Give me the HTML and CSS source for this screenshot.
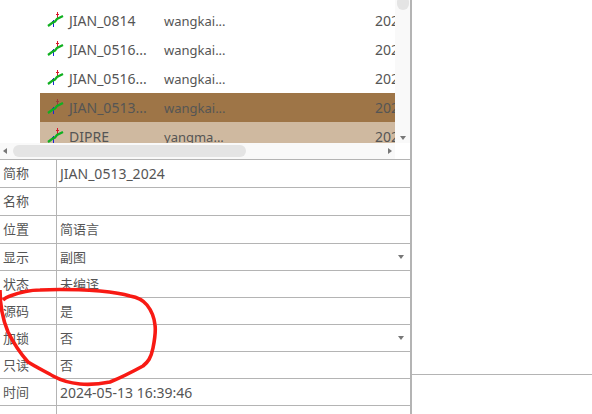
FILE: index.html
```html
<!DOCTYPE html>
<html lang="en">
<head>
    <meta charset="UTF-8">
    <meta name="viewport" content="width=device-width, initial-scale=1.0">
    <title>指标属性</title>
    <link rel="stylesheet" href="styles.css">
</head>
<body>
    <div class="page">
        <div class="left-panel">
            <!-- 指标列表 -->
            <div class="list-box">
                <div class="list-main">
                    <div class="list-rows">
                        <div class="list-row">
                            <svg class="row-icon" viewBox="0 0 18 17"><path class="ic-red" d="M10.5 0 V6 M9 2.5 H12"/><path class="ic-blue" d="M6.5 8 V15 M5 9.5 H8"/><path class="ic-green" d="M1 14 L5 11 L8 9.5 L10 7 L16 4"/></svg>
                            <span class="col-name">JIAN_0814</span><span class="col-user">wangkai...</span><span class="col-date">2024</span>
                        </div>
                        <div class="list-row">
                            <svg class="row-icon" viewBox="0 0 18 17"><path class="ic-red" d="M10.5 0 V6 M9 2.5 H12"/><path class="ic-blue" d="M6.5 8 V15 M5 9.5 H8"/><path class="ic-green" d="M1 14 L5 11 L8 9.5 L10 7 L16 4"/></svg>
                            <span class="col-name">JIAN_0516...</span><span class="col-user">wangkai...</span><span class="col-date">2024</span>
                        </div>
                        <div class="list-row">
                            <svg class="row-icon" viewBox="0 0 18 17"><path class="ic-red" d="M10.5 0 V6 M9 2.5 H12"/><path class="ic-blue" d="M6.5 8 V15 M5 9.5 H8"/><path class="ic-green" d="M1 14 L5 11 L8 9.5 L10 7 L16 4"/></svg>
                            <span class="col-name">JIAN_0516...</span><span class="col-user">wangkai...</span><span class="col-date">2024</span>
                        </div>
                        <div class="list-row selected">
                            <svg class="row-icon" viewBox="0 0 18 17"><path class="ic-red dim" d="M10.5 0 V6 M9 2.5 H12"/><path class="ic-blue" d="M6.5 8 V15 M5 9.5 H8"/><path class="ic-green" d="M1 14 L5 11 L8 9.5 L10 7 L16 4"/></svg>
                            <span class="col-name">JIAN_0513...</span><span class="col-user">wangkai...</span><span class="col-date">2024</span>
                        </div>
                        <div class="list-row hovered">
                            <svg class="row-icon" viewBox="0 0 18 17"><path class="ic-red" d="M10.5 0 V6 M9 2.5 H12"/><path class="ic-blue" d="M6.5 8 V15 M5 9.5 H8"/><path class="ic-green" d="M1 14 L5 11 L8 9.5 L10 7 L16 4"/></svg>
                            <span class="col-name">DIPRE</span><span class="col-user">yangma...</span><span class="col-date">2024</span>
                        </div>
                    </div>
                    <div class="vbar">
                        <div class="vbar-thumb"></div>
                        <div class="arrow-down"></div>
                    </div>
                </div>
                <div class="hbar">
                    <div class="hbar-track">
                        <div class="arrow-left"></div>
                        <div class="hbar-thumb"></div>
                        <div class="arrow-right"></div>
                    </div>
                    <div class="bar-corner"></div>
                </div>
            </div>

            <!-- 属性表 -->
            <div class="props">
                <div class="prop-row tall"><div class="prop-key">简称</div><div class="prop-val latin">JIAN_0513_2024</div></div>
                <div class="prop-row tall"><div class="prop-key">名称</div><div class="prop-val"></div></div>
                <div class="prop-row tall"><div class="prop-key">位置</div><div class="prop-val">简语言</div></div>
                <div class="prop-row"><div class="prop-key">显示</div><div class="prop-val">副图<span class="arrow-down select-arrow"></span></div></div>
                <div class="prop-row"><div class="prop-key">状态</div><div class="prop-val">未编译</div></div>
                <div class="prop-row"><div class="prop-key">源码</div><div class="prop-val">是</div></div>
                <div class="prop-row"><div class="prop-key">加锁</div><div class="prop-val">否<span class="arrow-down select-arrow"></span></div></div>
                <div class="prop-row"><div class="prop-key">只读</div><div class="prop-val">否</div></div>
                <div class="prop-row"><div class="prop-key">时间</div><div class="prop-val latin">2024-05-13 16:39:46</div></div>
                <div class="prop-row last"><div class="prop-key"></div><div class="prop-val"></div></div>
            </div>
        </div>
        <div class="right-panel">
            <div class="right-top"></div>
            <div class="right-bottom"></div>
        </div>
    </div>

    <!-- 红色手绘圈 -->
    <svg class="scribble" viewBox="0 0 592 414"><path d="M0 290 C0 305 3 320 8 332 C13 342 20 353 28 362 C36 367 46 372 53 376 C62 381 70 383 80 384 C90 385 100 384 110 382 C120 378 132 372 143 366 C148 362 151 358 153 348 C155 338 156 332 155 325 C154 316 151 310 147 305 C143 300 136 297 130 296 C120 293 110 292 100 291 C85 290 60 289 40 290 C28 290 18 293 10 296 C7 297 5 298 3 300"/></svg>
</body>
</html>
```

FILE: styles.css
```css
* {
    box-sizing: border-box;
}
body {
    margin: 0;
    background-color: #ffffff;
    font-family: "Noto Sans", "Noto Sans CJK SC", sans-serif;
    font-size: 13px;
    color: #555555;
    overflow: hidden;
}
.page {
    display: flex;
    width: 592px;
    height: 414px;
}
.left-panel {
    width: 412px;
    flex: none;
    border-right: 2px solid #b4b4b4;
}

/* list */
.list-box {
    height: 160px;
    border-bottom: 1px solid #b4b4b4;
}
.list-main {
    display: flex;
    height: 143px;
}
.list-rows {
    width: 395px;
    padding: 6px 0 0 40px;
    overflow: hidden;
}
.list-row {
    display: flex;
    align-items: center;
    height: 29px;
    white-space: nowrap;
    overflow: hidden;
}
.list-row.selected {
    background: #9e7547;
}
.list-row.hovered {
    background: #cfb9a0;
}
.row-icon {
    width: 18px;
    height: 17px;
    margin-left: 7px;
    flex: none;
    fill: none;
}
.ic-green {
    stroke: #10b020;
    stroke-width: 2.2;
}
.ic-red {
    stroke: #d8182c;
    stroke-width: 1;
}
.ic-red.dim {
    stroke: #9c3a3a;
}
.ic-blue {
    stroke: #1a24d8;
    stroke-width: 1;
}
.col-name {
    width: 95px;
    margin-left: 4px;
    flex: none;
    font-size: 14px;
}
.col-user {
    width: 211px;
    flex: none;
}
.col-date {
    flex: none;
    font-size: 14px;
}
.vbar {
    display: flex;
    flex-direction: column;
    align-items: center;
    justify-content: flex-end;
    position: relative;
    width: 15px;
    background: #f9f9f9;
    padding-bottom: 3px;
}
.vbar-thumb {
    position: absolute;
    top: -4px;
    left: 2px;
    width: 12px;
    height: 14px;
    border-radius: 6px;
    background: #e4e4e4;
}
.arrow-down {
    width: 0;
    height: 0;
    border-left: 3px solid transparent;
    border-right: 3px solid transparent;
    border-top: 4px solid #777777;
}
.hbar {
    display: flex;
    height: 16px;
}
.hbar-track {
    display: flex;
    align-items: center;
    width: 395px;
    padding: 0 3px;
    background: #f9f9f9;
}
.hbar-thumb {
    width: 233px;
    height: 12px;
    margin-left: 6px;
    border-radius: 6px;
    background: #e4e4e4;
}
.arrow-left {
    width: 0;
    height: 0;
    border-top: 3px solid transparent;
    border-bottom: 3px solid transparent;
    border-right: 4px solid #777777;
}
.arrow-right {
    width: 0;
    height: 0;
    margin-left: auto;
    border-top: 3px solid transparent;
    border-bottom: 3px solid transparent;
    border-left: 4px solid #777777;
}
.bar-corner {
    flex: 1;
}

/* properties */
.prop-row {
    display: flex;
    height: 27px;
    border-bottom: 1px solid #b4b4b4;
}
.prop-row.tall {
    height: 28px;
}
.prop-row.last {
    border-bottom: none;
}
.prop-key {
    width: 57px;
    flex: none;
    padding-left: 3px;
    border-right: 1px solid #b4b4b4;
    line-height: 27px;
}
.prop-val {
    flex: 1;
    display: flex;
    align-items: center;
    justify-content: space-between;
    padding: 0 6px 0 3px;
    line-height: 27px;
}
.prop-val.latin {
    font-size: 14px;
}
.select-arrow {
    flex: none;
}

/* right side */
.right-panel {
    flex: 1;
}
.right-top {
    height: 375px;
    border-bottom: 1px solid #b4b4b4;
}

.scribble {
    position: absolute;
    left: 0;
    top: 0;
    width: 592px;
    height: 414px;
    fill: none;
    stroke: #f81a14;
    stroke-width: 3.6;
    stroke-linejoin: round;
}
```
